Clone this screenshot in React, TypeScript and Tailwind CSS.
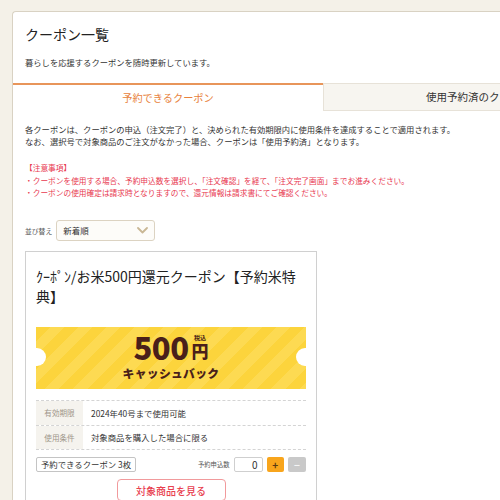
import React from "react";

const JP = { fontFamily: '"Noto Sans CJK JP", "Noto Sans", sans-serif' } as const;

export default function App() {
  return (
    <div
      className="w-[500px] h-[500px] overflow-hidden bg-[#f4f1e8] pl-[12px] pt-[11px] text-[#333]"
      style={JP}
    >
      <div className="w-[640px] min-h-[600px] bg-white border-l border-t border-[#d9d2c3] rounded-tl-[4px]">
        {/* header */}
        <div className="px-[12px] pt-[12px] pb-[15px]">
          <div className="text-[14px] leading-[20px] text-[#222]">クーポン一覧</div>
          <div className="mt-[12px] text-[8.3px] leading-[12px] text-[#333]">
            暮らしを応援するクーポンを随時更新しています。
          </div>
        </div>

        {/* tabs */}
        <div className="flex">
          <div className="w-[310px] h-[28px] border-t-2 border-[#e8955a] flex items-center justify-center text-[10.2px] text-[#e8823c]">
            予約できるクーポン
          </div>
          <div className="w-[311px] h-[28px] bg-[#f7f5f0] border border-[#e7e2d8] flex items-center justify-center text-[10.5px] text-[#333]">
            使用予約済のクーポン
          </div>
        </div>

        {/* content */}
        <div className="px-[12px] pt-[13px]">
          <div className="text-[8.3px] leading-[11.5px] text-[#333]">
            <div>
              各クーポンは、クーポンの申込（注文完了）と、決められた有効期限内に使用条件を達成することで適用されます。
            </div>
            <div>
              なお、選択号で対象商品のご注文がなかった場合、クーポンは「使用予約済」となります。
            </div>
          </div>

          <div className="mt-[15px] text-[7.7px] leading-[12.7px] text-[#e8384f]">
            <div>【注意事項】</div>
            <div>
              ・クーポンを使用する場合、予約申込数を選択し、「注文確認」を経て、「注文完了画面」までお進みください。
            </div>
            <div>
              ・クーポンの使用確定は請求時となりますので、還元情報は請求書にてご確認ください。
            </div>
          </div>

          {/* sort */}
          <div className="mt-[20px] flex items-center gap-[4px]">
            <span className="text-[6.8px] text-[#555]">並び替え</span>
            <div className="w-[99px] h-[21px] border border-[#dcd3c2] rounded-[3px] bg-[#fdfcf9] flex items-center justify-between pl-[6px] pr-[6px]">
              <span className="text-[8.5px] text-[#333]">新着順</span>
              <svg width="11" height="7" viewBox="0 0 11 7">
                <path d="M1 1 L5.5 5.5 L10 1" fill="none" stroke="#c9b795" strokeWidth="1.8" strokeLinecap="round" strokeLinejoin="round" />
              </svg>
            </div>
          </div>

          {/* card */}
          <div className="mt-[10px] w-[292px] border-[1.5px] border-[#d0d0d0] px-[10px] pt-[14px] pb-[10px]">
            <div className="text-[14px] leading-[20px] text-[#222]">
              ｸｰﾎﾟﾝ/お米500円還元クーポン【予約米特典】
            </div>

            {/* banner */}
            <div className="relative mt-[21px] h-[62px] overflow-hidden bg-[repeating-linear-gradient(135deg,#fcd43c_0px,#fcd43c_10px,#fdda52_10px,#fdda52_20px)] flex flex-col items-center pt-[3px]">
              <div className="absolute left-[-8px] top-[21px] w-[18px] h-[18px] rounded-full bg-white" />
              <div className="absolute right-[-8px] top-[21px] w-[18px] h-[18px] rounded-full bg-white" />
              <div className="flex items-end text-[#4a1f1a] h-[34px]">
                <span className="text-[31px] font-black tracking-[-0.5px] leading-[34px]">500</span>
                <span className="flex flex-col items-center ml-[3px] mb-[5px]">
                  <span className="text-[6px] font-bold leading-[7px] mb-[1px]">税込</span>
                  <span className="text-[17px] font-black leading-[17px]">円</span>
                </span>
              </div>
              <div className="mt-[1px] text-[11.8px] font-black text-[#4a1f1a] leading-[16px] tracking-[0.3px]">
                キャッシュバック
              </div>
            </div>

            {/* table */}
            <div className="mt-[11px] border-t border-dashed border-[#d4d4d4]">
              <div className="flex h-[24.5px] border-b border-dashed border-[#d4d4d4]">
                <div className="w-[47px] bg-[#f5f3ee] flex items-center justify-center text-[7.6px] text-[#a0968a]">有効期限</div>
                <div className="pl-[8px] flex items-center text-[8.4px] text-[#333]">2024年40号まで使用可能</div>
              </div>
              <div className="flex h-[24.5px] border-b border-dashed border-[#d4d4d4]">
                <div className="w-[47px] bg-[#f5f3ee] flex items-center justify-center text-[7.6px] text-[#a0968a]">使用条件</div>
                <div className="pl-[8px] flex items-center text-[8.4px] text-[#333]">対象商品を購入した場合に限る</div>
              </div>
            </div>

            {/* controls */}
            <div className="mt-[7px] flex items-center justify-between">
              <div className="h-[15px] w-[100px] border border-[#c4c4c4] rounded-[2px] flex items-center justify-center text-[8.4px] text-[#333]">
                予約できるクーポン 3枚
              </div>
              <div className="flex items-center">
                <span className="text-[6.3px] text-[#555] mr-[4px]">予約申込数</span>
                <div className="w-[29px] h-[15px] border border-[#cfcfcf] rounded-[2px] flex items-center justify-end pr-[4px] text-[10px] text-[#333]">
                  0
                </div>
                <div className="ml-[4px] w-[17.5px] h-[15px] rounded-[2px] bg-[#f8a51c] flex items-center justify-center text-[10px] font-bold text-[#5a3a10]">
                  +
                </div>
                <div className="ml-[4px] w-[18px] h-[15px] rounded-[2px] bg-[#c9c9c9] flex items-center justify-center text-[10px] font-bold text-[#f4f4f4]">
                  −
                </div>
              </div>
            </div>

            <div className="mt-[7px] flex justify-center">
              <div className="w-[109px] h-[22px] border border-[#f19a9c] rounded-[4px] flex items-center justify-center text-[10px] font-medium text-[#e8404f]">
                対象商品を見る
              </div>
            </div>
          </div>
        </div>
      </div>
    </div>
  );
}
